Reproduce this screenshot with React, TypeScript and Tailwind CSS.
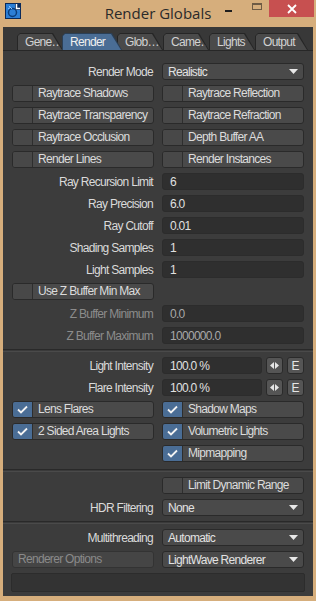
import React from 'react';

const Check = () => (
  <svg width="11" height="9" viewBox="0 0 11 9">
    <path d="M1 4.5 L4 7.5 L10 1.5" stroke="#f2f2f2" strokeWidth="1.8" fill="none" />
  </svg>
);

const Arrow = () => (
  <svg width="9" height="5" viewBox="0 0 9 5">
    <path d="M0 0 H9 L4.5 5 Z" fill="#e8e8e8" />
  </svg>
);

const Btn = ({ label, checked }: { label: string; checked?: boolean }) => (
  <div className="h-[17px] flex rounded-[3px] border border-[#2a2a2a] bg-[#4a4a4a] overflow-hidden">
    <div
      className={`w-[20px] shrink-0 border-r border-[#2e2e2e] flex items-center justify-center ${
        checked ? 'bg-[#4a6d95]' : 'bg-[#484848]'
      }`}
    >
      {checked && <Check />}
    </div>
    <span className="pl-[5px] leading-[15px] text-[#dcdcdc] whitespace-nowrap">{label}</span>
  </div>
);

const Drop = ({ value }: { value: string }) => (
  <div className="h-[17px] flex items-center justify-between rounded-[3px] border border-[#2a2a2a] bg-[#4a4a4a] pl-[5px] pr-[5px]">
    <span className="text-[#e2e2e2] whitespace-nowrap">{value}</span>
    <Arrow />
  </div>
);

const Field = ({ value, dim }: { value: string; dim?: boolean }) => (
  <div className="h-[17px] flex items-center rounded-[3px] border border-[#2c2c2c] bg-[#2f2f2f] pl-[7px]">
    <span className={dim ? 'text-[#a8a8a8]' : 'text-[#e0e0e0]'}>{value}</span>
  </div>
);

const Label = ({ text, dim }: { text: string; dim?: boolean }) => (
  <div className={`h-[17px] flex items-center justify-end pr-[1px] whitespace-nowrap ${dim ? 'text-[#8c8c8c]' : 'text-[#dadada]'}`}>
    {text}
  </div>
);

const Row = ({ children }: { children: React.ReactNode }) => (
  <div className="grid grid-cols-[142px_142px] gap-x-[8px] h-[17px]">{children}</div>
);

const Sep = ({ className = '' }: { className?: string }) => (
  <div className={`-mx-[9px] h-[3px] border-t border-[#292929] bg-[#3a3a3a] border-b border-b-[#4a4a4a] ${className}`} />
);

const tabs = [
  { t: 'Gene…', w: 'w-[46px]', c: '' },
  { t: 'Render', w: 'w-[60px] -ml-[1px] z-10', c: 'active' },
  { t: 'Glob…', w: 'w-[46px] -ml-[5px]', c: '' },
  { t: 'Came…', w: 'w-[46px]', c: '' },
  { t: 'Lights', w: 'w-[46px]', c: '' },
  { t: 'Output', w: 'w-[53px]', c: '' },
];

export default function App() {
  return (
    <div className="w-[316px] h-[601px] bg-[#d6ae7c] flex flex-col font-['Liberation_Sans',sans-serif] text-[12px] tracking-[-0.7px] overflow-hidden">
      {/* title bar */}
      <div className="h-[27px] shrink-0 flex items-start relative">
        <div className="ml-[5px] mt-[3px]">
          <svg width="16" height="16" viewBox="0 0 16 16">
            <rect x="0" y="0" width="16" height="16" fill="#0a2a5a" />
            <rect x="1" y="1" width="14" height="14" fill="#2c7fd6" />
            <circle cx="7.5" cy="9.5" r="4" stroke="#0b3d7a" strokeWidth="1.5" fill="none" />
            <path d="M4 3 L7 6 M3 6 L6 4" stroke="#8cc4ff" strokeWidth="1" />
            <rect x="10" y="0" width="6" height="7" fill="#0a2a5a" />
            <path d="M11.5 1 V5.5 H15" stroke="#ffffff" strokeWidth="1.5" fill="none" />
          </svg>
        </div>
        <div className="absolute left-0 right-0 top-[3px] text-center text-[15px] tracking-normal text-[#2a2a2a] font-['Open_Sans',sans-serif] leading-[20px]">
          Render Globals
        </div>
        <div className="ml-auto flex items-start relative">
          <div className="w-[7px] h-[2px] bg-[#1e1e1e] mt-[10px] mr-[20px]" />
          <div className="w-[10px] h-[7px] border border-[#6e5b44] border-t-[2px] mt-[3px] mr-[7px]" />
          <div className="w-[45px] h-[17px] bg-[#c75050] flex items-center justify-center mr-[2px]">
            <svg width="10" height="10" viewBox="0 0 10 10">
              <path d="M1 1 L9 9 M9 1 L1 9" stroke="#ffffff" strokeWidth="1.8" />
            </svg>
          </div>
        </div>
      </div>

      <div className="mx-[3px] flex-1 bg-[#3b3b3b] flex flex-col">
        {/* tabs */}
        <div className="h-[24px] shrink-0 flex items-end pl-[14px] bg-[#383838] border-b border-[#272727]">
          {tabs.map((tb) => (
            <div
              key={tb.t}
              className={`relative h-[17px] ${tb.w} shrink-0 [clip-path:polygon(0_3px,3px_0,calc(100%-10px)_0,100%_100%,0_100%)] ${
                tb.c ? 'bg-[#2b3f55]' : 'bg-[#262626]'
              }`}
            >
              <div
                className={`absolute inset-[1px] bottom-0 [clip-path:polygon(0_2px,2px_0,calc(100%-10px)_0,100%_100%,0_100%)] pl-[7px] leading-[16px] ${
                  tb.c ? 'bg-[#4a6d95] text-[#f0f0f0]' : 'bg-[#4a4a4a] text-[#d2d2d2]'
                }`}
              >
                {tb.t}
              </div>
            </div>
          ))}
        </div>

        {/* content */}
        <div className="flex-1 px-[9px] pt-[12px] pb-[4px] flex flex-col gap-[5px] bg-[#3c3c3c]">
          <Row>
            <Label text="Render Mode" />
            <Drop value="Realistic" />
          </Row>
          <Row>
            <Btn label="Raytrace Shadows" />
            <Btn label="Raytrace Reflection" />
          </Row>
          <Row>
            <Btn label="Raytrace Transparency" />
            <Btn label="Raytrace Refraction" />
          </Row>
          <Row>
            <Btn label="Raytrace Occlusion" />
            <Btn label="Depth Buffer AA" />
          </Row>
          <Row>
            <Btn label="Render Lines" />
            <Btn label="Render Instances" />
          </Row>
          <Row>
            <Label text="Ray Recursion Limit" />
            <Field value="6" />
          </Row>
          <Row>
            <Label text="Ray Precision" />
            <Field value="6.0" />
          </Row>
          <Row>
            <Label text="Ray Cutoff" />
            <Field value="0.01" />
          </Row>
          <Row>
            <Label text="Shading Samples" />
            <Field value="1" />
          </Row>
          <Row>
            <Label text="Light Samples" />
            <Field value="1" />
          </Row>
          <Row>
            <Btn label="Use Z Buffer Min Max" />
            <div />
          </Row>
          <Row>
            <Label text="Z Buffer Minimum" dim />
            <Field value="0.0" dim />
          </Row>
          <Row>
            <Label text="Z Buffer Maximum" dim />
            <Field value="1000000.0" dim />
          </Row>
          <Sep />
          {['Light Intensity', 'Flare Intensity'].map((l) => (
            <Row key={l}>
              <Label text={l} />
              <div className="flex gap-[4px]">
                <div className="w-[100px]">
                  <Field value="100.0 %" />
                </div>
                <div className="w-[17px] h-[17px] rounded-[3px] border border-[#2a2a2a] bg-[#555555] flex items-center justify-center">
                  <svg width="9" height="7" viewBox="0 0 9 7">
                    <path d="M4 0 V7 L0 3.5 Z M5 0 V7 L9 3.5 Z" fill="#e6e6e6" />
                  </svg>
                </div>
                <div className="w-[17px] h-[17px] rounded-[3px] border border-[#2a2a2a] bg-[#555555] flex items-center justify-center text-[#e6e6e6] leading-none tracking-normal">
                  E
                </div>
              </div>
            </Row>
          ))}
          <Row>
            <Btn label="Lens Flares" checked />
            <Btn label="Shadow Maps" checked />
          </Row>
          <Row>
            <Btn label="2 Sided Area Lights" checked />
            <Btn label="Volumetric Lights" checked />
          </Row>
          <Row>
            <div />
            <Btn label="Mipmapping" checked />
          </Row>
          <Sep className="mt-[2px]" />
          <Row>
            <div />
            <Btn label="Limit Dynamic Range" />
          </Row>
          <Row>
            <Label text="HDR Filtering" />
            <Drop value="None" />
          </Row>
          <Sep />
          <Row>
            <Label text="Multithreading" />
            <Drop value="Automatic" />
          </Row>
          <Row>
            <div className="h-[17px] rounded-[3px] border border-[#333333] bg-[#454545] pl-[5px] leading-[15px] text-[#8a8a8a] whitespace-nowrap">
              Renderer Options
            </div>
            <Drop value="LightWave Renderer" />
          </Row>
          <div className="h-[19px] -mx-[1px] rounded-[2px] border border-[#2c2c2c] bg-[#333333]" />
        </div>
      </div>
      <div className="h-[5px] shrink-0" />
    </div>
  );
}
